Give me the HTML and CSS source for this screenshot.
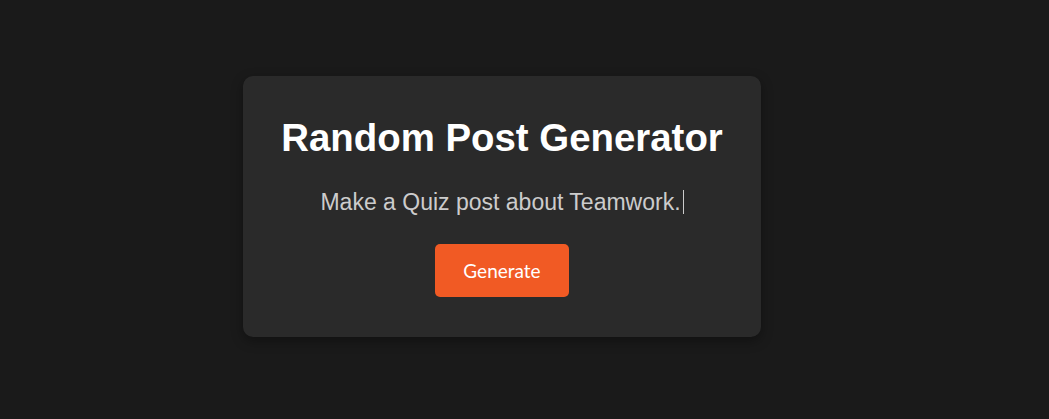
FILE: index.html
```html
<!DOCTYPE html>
<html lang="en">
<head>
<meta charset="utf-8">
<title>Random Post Generator</title>
<link rel="stylesheet" href="styles.css">
</head>
<body>
<main class="stage">
  <section class="card">
    <h1 class="title">Random Post Generator</h1>
    <p class="prompt"><span class="prompt-text">Make a Quiz post about Teamwork.</span><span class="caret"></span></p>
    <button class="generate" type="button">Generate</button>
  </section>
</main>
</body>
</html>
```
FILE: styles.css
```css
html, body {
  margin: 0;
  padding: 0;
  height: 100%;
}
body {
  background: #1a1a1a;
  font-family: "Liberation Sans", Arial, sans-serif;
}
.stage {
  height: 100%;
  display: flex;
  align-items: center;
  justify-content: center;
  padding-right: 45px;
  padding-bottom: 6px;
  box-sizing: border-box;
}
.card {
  width: 518px;
  box-sizing: border-box;
  background: #2a2a2a;
  border-radius: 10px;
  padding: 40px 20px;
  box-shadow: 0 4px 12px rgba(0, 0, 0, 0.35);
  display: flex;
  flex-direction: column;
  align-items: center;
  text-align: center;
}
.title {
  margin: 0;
  color: #ffffff;
  font-size: 38.4px;
  font-weight: bold;
  line-height: 44px;
}
.prompt {
  margin: 29px 0 29px;
  color: #cccccc;
  font-size: 23px;
  line-height: 26px;
  display: flex;
  align-items: center;
}
.caret {
  display: inline-block;
  width: 1px;
  height: 24px;
  background: #cccccc;
  margin-left: 2px;
}
.generate {
  background: #f15a24;
  color: #ffffff;
  border: none;
  border-radius: 5px;
  font-family: Lato, "Open Sans", sans-serif;
  font-size: 19px;
  line-height: 24px;
  padding: 15px 28px 14px;
  cursor: pointer;
}
```
